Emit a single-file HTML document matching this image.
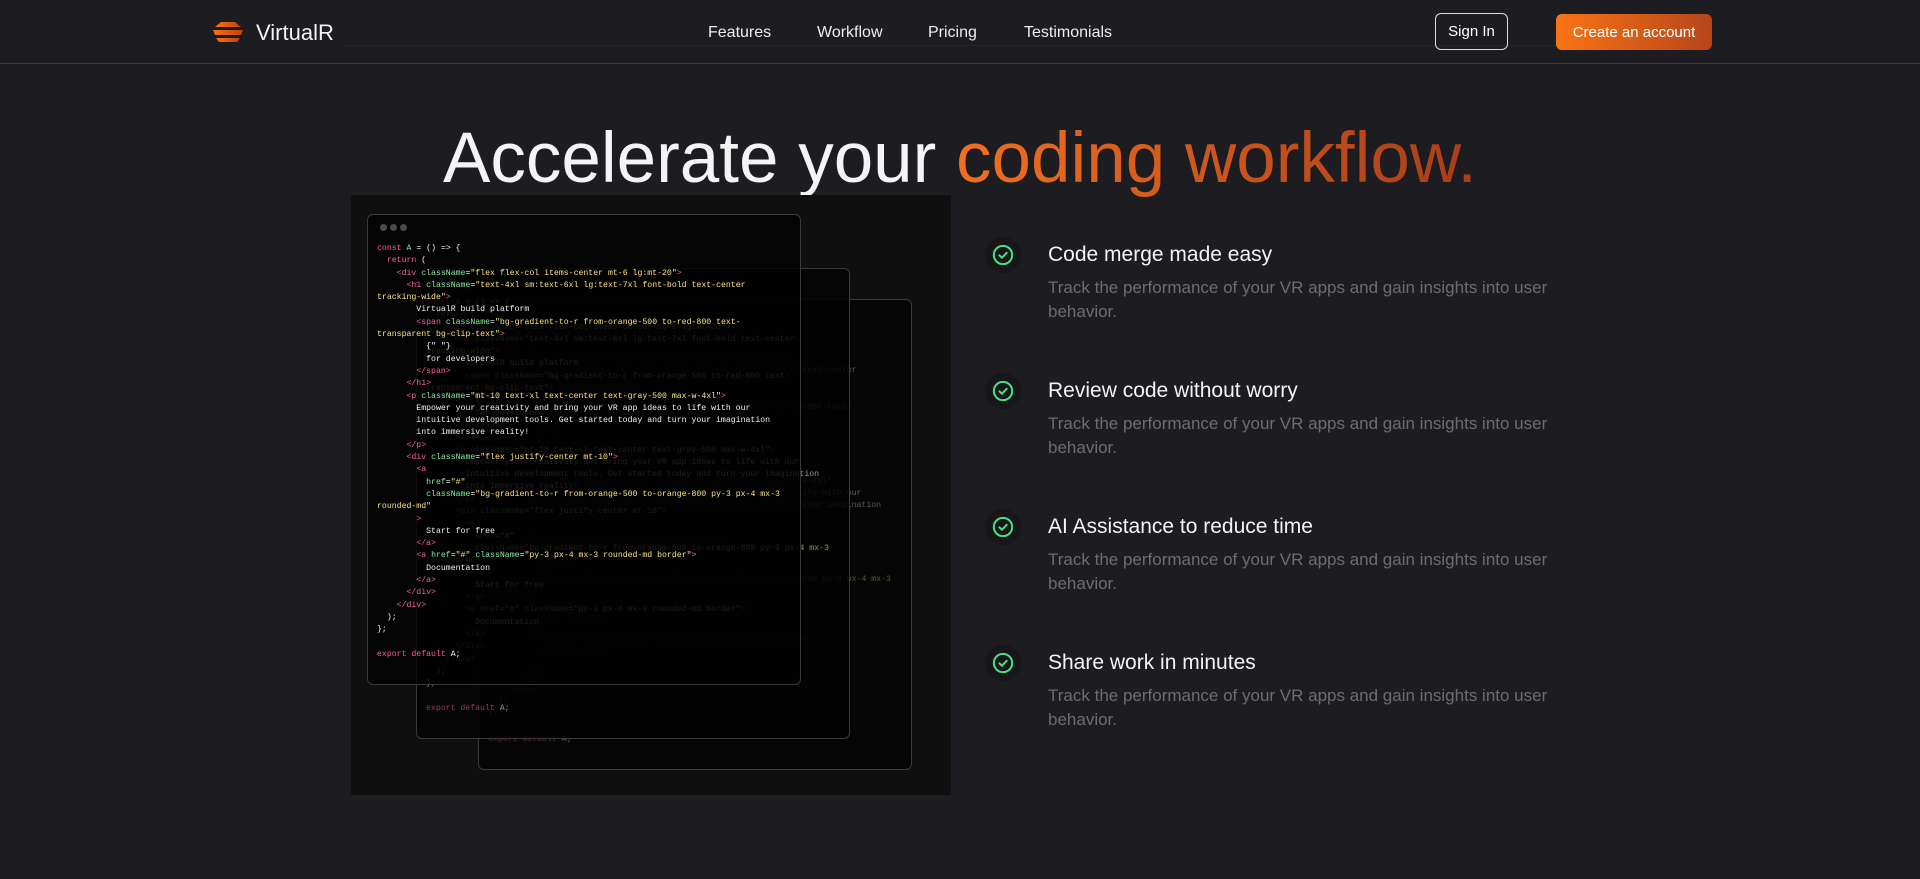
<!DOCTYPE html>
<html><head><meta charset="utf-8"><style>
*{margin:0;padding:0;box-sizing:border-box}
body{width:1920px;height:879px;background:#1c1c21;font-family:"Liberation Sans",sans-serif;color:#fff;position:relative;overflow:hidden}
.abs{position:absolute}
.nav{left:0;top:0;width:1920px;height:64px;border-bottom:1px solid #3a3a40}
.navline{left:344px;top:45px;width:1212px;height:1px;background:#26262c}
.logo{left:211px;top:20px}
.brand{left:256px;top:20px;font-size:22px;color:#f2f2f2}
.link{top:24px;font-size:16px;color:#eee}
.signin{left:1435px;top:13px;width:73px;height:37px;border:1px solid #ddd;border-radius:6px;font-size:15px;display:flex;align-items:center;justify-content:center}
.create{left:1556px;top:14px;width:156px;height:36px;border-radius:6px;font-size:15px;display:flex;align-items:center;justify-content:center;background:linear-gradient(90deg,#f97316,#b6461a)}
h1{position:absolute;left:0;width:1920px;top:118px;text-align:center;font-weight:400;font-size:71px;letter-spacing:0px;color:#f4f4f4}
.grad{background:linear-gradient(90deg,#f07020,#a83c1a);-webkit-background-clip:text;background-clip:text;color:transparent}
.panel{left:351px;top:195px;width:600px;height:600px;background:#0f0f10}
.win{position:absolute;border:1px solid #3a3a3e;border-radius:6px;overflow:hidden}
.dots{position:absolute;left:12px;top:9px;display:flex;gap:3px}
.dots i{width:7px;height:7px;border-radius:50%;background:#4a4a4e;display:block}
pre{position:absolute;left:9px;top:28px;font-family:"Liberation Mono",monospace;font-size:8.2px;line-height:12.3px;color:#f2f2f2;white-space:pre}
.k{color:#f4609a}.a{color:#86e6a0}.s{color:#fbe38a}
.ic{width:36px;height:36px;border-radius:50%;background:#17171b;display:flex;align-items:center;justify-content:center}
.ft{left:1048px;font-size:21px;color:#f4f4f4}
.fd{left:1048px;width:540px;font-size:17px;line-height:24px;color:#6c6c72}
</style></head><body>
<div class="abs nav"></div>
<div class="abs navline"></div>
<svg class="abs logo" width="34" height="24" viewBox="0 0 34 24">
<defs><linearGradient id="lg" x1="0" x2="1"><stop offset="0" stop-color="#f97316"/><stop offset="1" stop-color="#c2410c"/></linearGradient></defs>
<path d="M10 2 L24 2 L30 7 L4 7 Z" fill="url(#lg)"/>
<path d="M2 10 L32 10 L30 15 L4 15 Z" fill="url(#lg)"/>
<path d="M5 18 L29 18 L26 22 L8 22 Z" fill="url(#lg)"/>
</svg>
<div class="abs brand">VirtualR</div>
<div class="abs link" style="left:708px">Features</div>
<div class="abs link" style="left:817px">Workflow</div>
<div class="abs link" style="left:928px">Pricing</div>
<div class="abs link" style="left:1024px">Testimonials</div>
<div class="abs signin">Sign In</div>
<div class="abs create">Create an account</div>

<h1>Accelerate your <span class="grad">coding workflow.</span></h1>

<div class="abs panel"></div>

<div class="win" style="left:478px;top:299px;width:434px;height:471px;background:#060606">
<div class="dots"><i></i><i></i><i></i></div>
<pre style="opacity:.35" id="c3"></pre></div>
<div class="win" style="left:416px;top:268px;width:434px;height:471px;background:rgba(4,4,4,.85)">
<div class="dots"><i></i><i></i><i></i></div>
<pre style="opacity:.6" id="c2"></pre></div>
<div class="win" style="left:367px;top:214px;width:434px;height:471px;background:rgba(3,3,3,.82)">
<div class="dots"><i></i><i></i><i></i></div>
<pre id="c1"><span class="k">const</span> <span class="a">A</span> = () =&gt; {
  <span class="k">return</span> (
    <span class="k">&lt;div</span> <span class="a">className</span>=<span class="s">"flex flex-col items-center mt-6 lg:mt-20"</span><span class="k">&gt;</span>
      <span class="k">&lt;h1</span> <span class="a">className</span>=<span class="s">"text-4xl sm:text-6xl lg:text-7xl font-bold text-center
tracking-wide"</span><span class="k">&gt;</span>
        VirtualR build platform
        <span class="k">&lt;span</span> <span class="a">className</span>=<span class="s">"bg-gradient-to-r from-orange-500 to-red-800 text-
transparent bg-clip-text"</span><span class="k">&gt;</span>
          {" "}
          for developers
        <span class="k">&lt;/span&gt;</span>
      <span class="k">&lt;/h1&gt;</span>
      <span class="k">&lt;p</span> <span class="a">className</span>=<span class="s">"mt-10 text-xl text-center text-gray-500 max-w-4xl"</span><span class="k">&gt;</span>
        Empower your creativity and bring your VR app ideas to life with our
        intuitive development tools. Get started today and turn your imagination
        into immersive reality!
      <span class="k">&lt;/p&gt;</span>
      <span class="k">&lt;div</span> <span class="a">className</span>=<span class="s">"flex justify-center mt-10"</span><span class="k">&gt;</span>
        <span class="k">&lt;a</span>
          <span class="a">href</span>=<span class="s">"#"</span>
          <span class="a">className</span>=<span class="s">"bg-gradient-to-r from-orange-500 to-orange-800 py-3 px-4 mx-3
rounded-md"</span>
        <span class="k">&gt;</span>
          Start for free
        <span class="k">&lt;/a&gt;</span>
        <span class="k">&lt;a</span> <span class="a">href</span>=<span class="s">"#"</span> <span class="a">className</span>=<span class="s">"py-3 px-4 mx-3 rounded-md border"</span><span class="k">&gt;</span>
          Documentation
        <span class="k">&lt;/a&gt;</span>
      <span class="k">&lt;/div&gt;</span>
    <span class="k">&lt;/div&gt;</span>
  );
};

<span class="k">export default</span> A;</pre></div>
<script>var c=document.getElementById('c1').innerHTML;document.getElementById('c2').innerHTML=c;document.getElementById('c3').innerHTML=c;</script>

<svg width="0" height="0" style="position:absolute"><symbol id="chk" viewBox="0 0 24 24"><circle cx="12" cy="12" r="10" fill="none" stroke="#4ade80" stroke-width="2.2"/><path d="M8 12.3 L10.8 15 L16 9.6" fill="none" stroke="#4ade80" stroke-width="2.2" stroke-linecap="round" stroke-linejoin="round"/></symbol></svg>

<div class="abs ic" style="left:985px;top:237px"><svg width="22" height="22"><use href="#chk"/></svg></div>
<div class="abs ft" style="top:243px">Code merge made easy</div>
<div class="abs fd" style="top:276px">Track the performance of your VR apps and gain insights into user behavior.</div>

<div class="abs ic" style="left:985px;top:373px"><svg width="22" height="22"><use href="#chk"/></svg></div>
<div class="abs ft" style="top:379px">Review code without worry</div>
<div class="abs fd" style="top:412px">Track the performance of your VR apps and gain insights into user behavior.</div>

<div class="abs ic" style="left:985px;top:509px"><svg width="22" height="22"><use href="#chk"/></svg></div>
<div class="abs ft" style="top:515px">AI Assistance to reduce time</div>
<div class="abs fd" style="top:548px">Track the performance of your VR apps and gain insights into user behavior.</div>

<div class="abs ic" style="left:985px;top:645px"><svg width="22" height="22"><use href="#chk"/></svg></div>
<div class="abs ft" style="top:651px">Share work in minutes</div>
<div class="abs fd" style="top:684px">Track the performance of your VR apps and gain insights into user behavior.</div>
</body></html>
